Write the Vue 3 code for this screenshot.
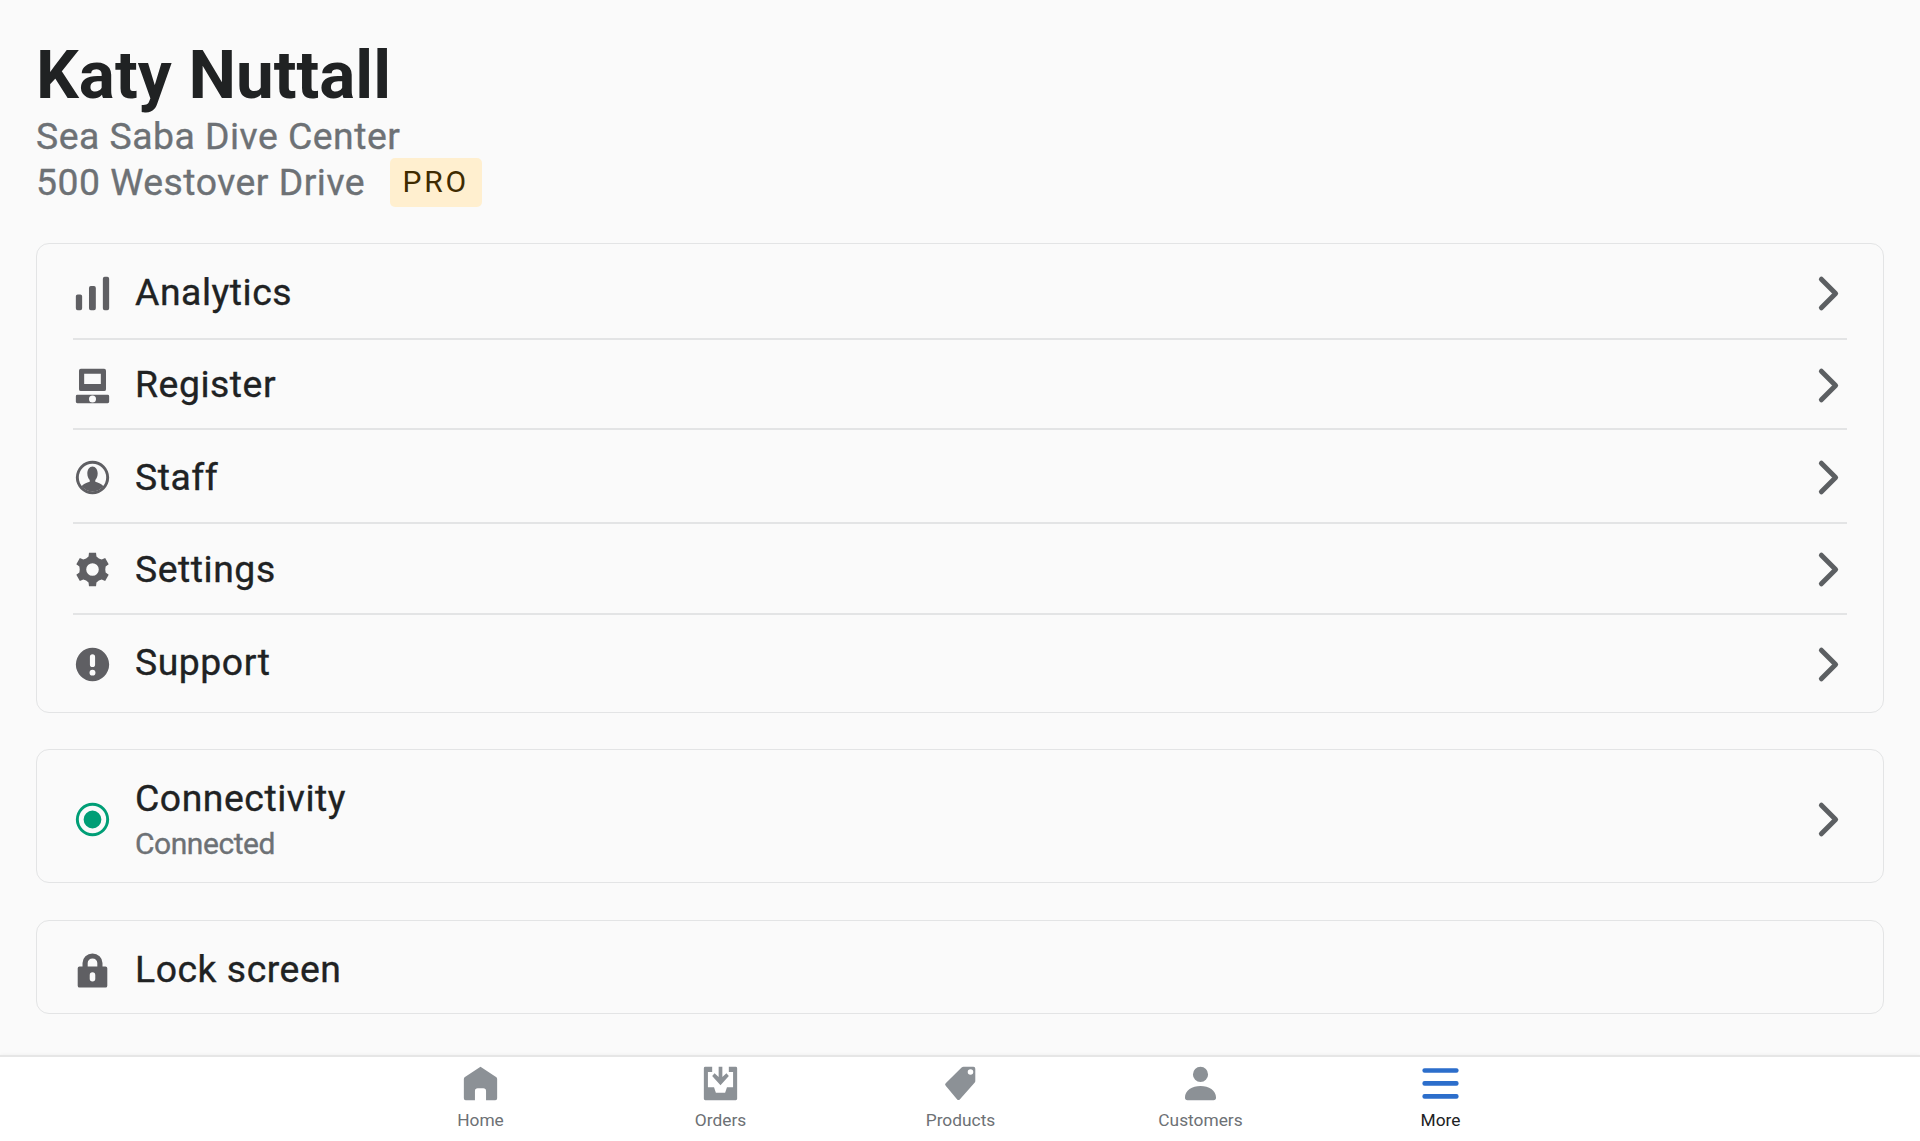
<template>
  <div class="page">
    <main class="content">
      <header class="profile">
        <h1>Katy Nuttall</h1>
        <div class="profile-line">Sea Saba Dive Center</div>
        <div class="profile-line">
          <span>500 Westover Drive</span>
          <span class="badge">PRO</span>
        </div>
      </header>

      <section class="card menu-card">
        <div class="row" v-for="item in menu" :key="item.label">
          <svg class="icon" viewBox="0 0 20 20">
            <path v-for="(d, i) in item.paths" :key="i" :d="d" fill-rule="evenodd" />
          </svg>
          <span class="row-label">{{ item.label }}</span>
          <svg class="chevron" viewBox="0 0 20 20">
            <path d="M6.15 2.3 13.85 10 6.15 17.7" />
          </svg>
        </div>
      </section>

      <section class="card connectivity-card">
        <div class="row">
          <svg class="icon green" viewBox="0 0 20 20">
            <path :d="connectedIcon" fill-rule="evenodd" />
          </svg>
          <div class="row-text">
            <span class="row-label">Connectivity</span>
            <span class="row-sub">Connected</span>
          </div>
          <svg class="chevron" viewBox="0 0 20 20">
            <path d="M6.15 2.3 13.85 10 6.15 17.7" />
          </svg>
        </div>
      </section>

      <section class="card lock-card">
        <div class="row">
          <svg class="icon" viewBox="0 0 20 20">
            <path :d="lockIcon" fill-rule="evenodd" />
          </svg>
          <span class="row-label">Lock screen</span>
        </div>
      </section>
    </main>

    <nav class="tabbar">
      <div class="tab" v-for="tab in tabs" :key="tab.label" :class="{ active: tab.active }">
        <svg class="tab-icon" viewBox="0 0 20 20">
          <path v-for="(d, i) in tab.paths" :key="i" :d="d" fill-rule="evenodd" />
        </svg>
        <span>{{ tab.label }}</span>
      </div>
    </nav>
  </div>
</template>

<script setup>
// rounded rect as path data
const rr = (x, y, w, h, r) =>
  `M${x + r} ${y}h${w - 2 * r}a${r} ${r} 0 0 1 ${r} ${r}v${h - 2 * r}a${r} ${r} 0 0 1-${r} ${r}h-${w - 2 * r}a${r} ${r} 0 0 1-${r}-${r}v-${h - 2 * r}a${r} ${r} 0 0 1 ${r}-${r}z`;

const circle = (cx, cy, r) =>
  `M${cx - r} ${cy}a${r} ${r} 0 1 0 ${2 * r} 0a${r} ${r} 0 1 0-${2 * r} 0z`;

// six tooth gear
const gear = () => {
  const pts = [];
  for (let i = 0; i < 6; i++) {
    const a = -90 + i * 60;
    [
      [a - 30, 6.9],
      [a - 17, 7.3],
      [a - 12, 9.2],
      [a + 12, 9.2],
      [a + 17, 7.3],
    ].forEach(([deg, r]) => {
      const rad = (deg * Math.PI) / 180;
      pts.push(`${(10 + r * Math.cos(rad)).toFixed(2)} ${(10 + r * Math.sin(rad)).toFixed(2)}`);
    });
  }
  return "M" + pts.join("L") + "z" + circle(10, 10, 3.4);
};

const menu = [
  {
    label: "Analytics",
    paths: [rr(1, 10.5, 3.4, 8.5, 1) + rr(8.1, 6, 3.7, 13, 1) + rr(15.6, 1, 3.4, 18, 1)],
  },
  {
    label: "Register",
    paths: [
      rr(2.7, 1, 14.6, 12, 1) + rr(5.5, 3.6, 9, 5.6, 0),
      rr(1, 15, 18, 4.6, 0.8) + circle(10, 17.3, 1.9),
    ],
  },
  {
    label: "Staff",
    paths: [
      circle(10, 10, 9) + circle(10, 10, 7.4),
      "M7.2 7.8C7.2 5.6 8.4 4 10 4s2.8 1.6 2.8 3.8c0 1.6-.7 3-1.3 3.6v.9c1.6.4 3.6 1.2 4.4 2.4A7.4 7.4 0 0 1 10 17.4a7.4 7.4 0 0 1-5.9-2.7c.8-1.2 2.8-2 4.4-2.4v-.9c-.6-.6-1.3-2-1.3-3.6z",
    ],
  },
  { label: "Settings", paths: [gear()] },
  {
    label: "Support",
    paths: [circle(10, 10, 9) + rr(8.6, 4.4, 2.8, 7, 1.4) + circle(10, 14.4, 1.6)],
  },
];

const connectedIcon =
  circle(10, 10, 9) + circle(10, 10, 7.4) + circle(10, 10, 4.8);

const lockIcon =
  "M4.6 7.8V6a5.4 5.2 0 0 1 10.8 0v1.8h1.6a1 1 0 0 1 1 1V18.2a1 1 0 0 1-1 1H3a1 1 0 0 1-1-1V8.8a1 1 0 0 1 1-1zM7.4 7.8h5.2V6a2.6 2.5 0 0 0-5.2 0z" +
  rr(8.5, 11, 3, 5, 1.5);

const tabs = [
  {
    label: "Home",
    paths: [
      "M10 1 18.4 6.5a1.2 1.2 0 0 1 .6 1V18a1 1 0 0 1-1 1h-5v-5a1.5 1.5 0 0 0-1.5-1.5h-3A1.5 1.5 0 0 0 7 14v5H2a1 1 0 0 1-1-1V7.5a1.2 1.2 0 0 1 .6-1z",
    ],
  },
  {
    label: "Orders",
    paths: [
      rr(1, 1, 18, 18, 0.8) + "M5.5 1V3.8H3.2V12H6.5L7.5 15H12.5L13.5 12H16.8V3.8H14.5V1z",
      "M9 1h2v5.5l2.2-2 1.3 1.4L10 11 5.5 5.9 6.8 4.5 9 6.5z",
    ],
  },
  {
    label: "Products",
    paths: [
      "M11.6 1H17a1 1 0 0 1 1 1v6.6a1.5 1.5 0 0 1-.4 1L9.6 18.6a1 1 0 0 1-1.4 0L2 11.2a1 1 0 0 1 0-1.4L10.6 1.4a1.5 1.5 0 0 1 1-.4z" +
        circle(15.4, 3.8, 1.5),
    ],
  },
  {
    label: "Customers",
    paths: [
      circle(10, 5.1, 4.1),
      "M1.6 17.6C1.6 13.6 5.5 11.3 10 11.3s8.4 2.3 8.4 6.3a1.4 1.4 0 0 1-1.4 1.4H3a1.4 1.4 0 0 1-1.4-1.4z",
    ],
  },
  {
    label: "More",
    active: true,
    paths: [rr(0.2, 1.7, 19.6, 2.5, 1.2) + rr(0.2, 8.7, 19.6, 2.5, 1.2) + rr(0.2, 15.7, 19.6, 2.5, 1.2)],
  },
];
</script>

<style>
body {
  background: #fafafa;
}
</style>

<style scoped>
.page {
  display: flex;
  flex-direction: column;
  height: 1141px;
  overflow: hidden;
  background: #fafafa;
  font-family: Roboto, sans-serif;
  color: #202223;
}

.content {
  flex: 1;
  padding: 0 36px;
  box-sizing: border-box;
}

.profile {
  padding-top: 37px;
  height: 243px;
  box-sizing: border-box;
}

.profile h1 {
  margin: 0;
  font-size: 67.4px;
  line-height: 75px;
  font-weight: 700;
  color: #202223;
}

.profile-line {
  display: flex;
  align-items: center;
  height: 45px;
  margin-top: 1px;
  font-size: 37.33px;
  color: #6d7175;
  font-weight: 400;
  letter-spacing: 0.5px;
  -webkit-text-stroke: 0.35px #6d7175;
}

.badge {
  margin-left: 25px;
  margin-top: 2px;
  padding: 0 12.5px;
  height: 49px;
  line-height: 47px;
  background: #ffefcf;
  border-radius: 5px;
  color: #3f2b00;
  font-size: 30px;
  font-weight: 400;
  letter-spacing: 2.8px;
  -webkit-text-stroke: 0;
}

.card {
  border: 1.5px solid #e3e4e5;
  border-radius: 13px;
  box-sizing: border-box;
  padding: 0 36px;
}

.menu-card {
  height: 470px;
}

.connectivity-card {
  margin-top: 36px;
  height: 134px;
}

.lock-card {
  margin-top: 37px;
  height: 94px;
}

.row {
  display: flex;
  align-items: center;
  height: 100%;
  box-sizing: border-box;
}

.menu-card .row {
  height: 91px;
  border-bottom: 2px solid #e3e4e5;
}

.menu-card .row:nth-child(1) {
  height: 96px;
  padding-top: 1px;
}

.menu-card .row:nth-child(2) {
  height: 90px;
}

.menu-card .row:nth-child(3) {
  height: 94px;
  padding-top: 1px;
}

.menu-card .row:nth-child(5) {
  height: 97px;
  padding-bottom: 4px;
  border-bottom: none;
}

.menu-card .row .icon,
.menu-card .row .chevron {
  margin-top: 2px;
}

.menu-card .row:nth-child(1) .icon,
.menu-card .row:nth-child(1) .chevron {
  margin-top: 3px;
}

.menu-card .row:nth-child(5) .icon,
.menu-card .row:nth-child(5) .chevron {
  margin-top: 6px;
}

.connectivity-card .row {
  padding-top: 6px;
}

.lock-card .row {
  padding-top: 3px;
}

.lock-card .icon {
  margin-top: 4px;
}

.icon {
  flex: none;
  width: 37px;
  height: 37px;
  margin-left: 1px;
  fill: #5f5f63;
}

.icon.green {
  fill: #009e76;
}

.row-label {
  margin-left: 24px;
  font-size: 37.33px;
  font-weight: 400;
  line-height: 44px;
  letter-spacing: 0.55px;
  color: #202223;
  -webkit-text-stroke: 0.35px #202223;
}

.row-text {
  display: flex;
  flex-direction: column;
  padding-top: 2px;
}

.row-text .row-label {
  margin-top: 1px;
}

.row-sub {
  margin-left: 24px;
  margin-top: 2px;
  font-size: 30px;
  font-weight: 400;
  line-height: 44px;
  letter-spacing: -0.45px;
  color: #6d7175;
  -webkit-text-stroke: 0.35px #6d7175;
}

.chevron {
  flex: none;
  width: 37px;
  height: 37px;
  margin-left: auto;
  fill: none;
  stroke: #5c5f62;
  stroke-width: 2.7;
  stroke-linecap: round;
  stroke-linejoin: round;
}

.tabbar {
  flex: none;
  height: 86px;
  display: flex;
  justify-content: center;
  padding-left: 1px;
  background: #fff;
  border-top: 2px solid #e6e6e6;
  box-shadow: 0 -1px 3px rgba(0, 0, 0, 0.03);
  box-sizing: border-box;
}

.tab {
  width: 240px;
  display: flex;
  flex-direction: column;
  align-items: center;
  padding-top: 8px;
  font-size: 17.33px;
  line-height: 20px;
  color: #6d7175;
}

.tab span {
  margin-top: 8px;
}

.tab-icon {
  width: 37px;
  height: 37px;
  fill: #8c9196;
}

.tab.active {
  color: #202223;
}

.tab.active .tab-icon {
  fill: #2c6ecb;
}
</style>
